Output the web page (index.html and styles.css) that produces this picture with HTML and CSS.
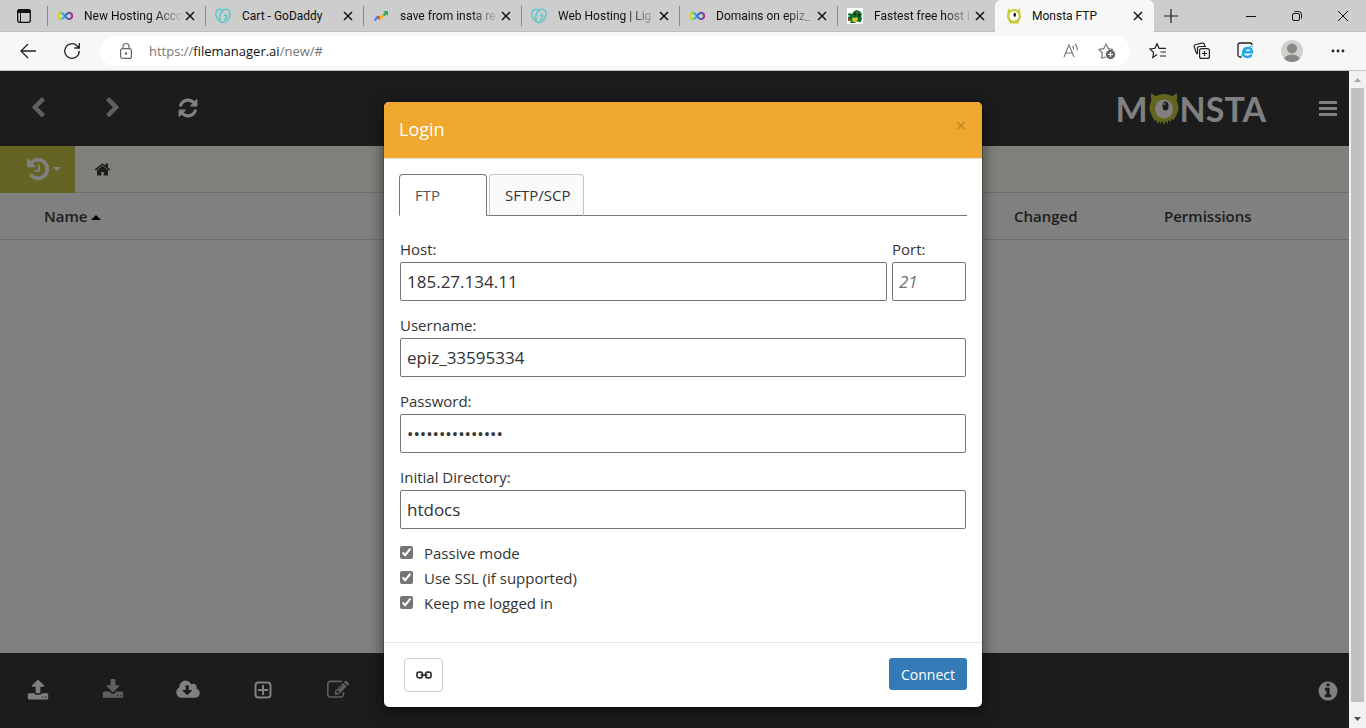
FILE: index.html
```html
<!DOCTYPE html>
<html lang="en">
<head>
<meta charset="utf-8">
<title>Monsta FTP</title>
<link rel="stylesheet" href="styles.css">
</head>
<body>
<svg class="defs" aria-hidden="true">
  <defs>
    <linearGradient id="rainbow" x1="0" x2="1" y1="0" y2="0">
      <stop offset="0" stop-color="#f2d600"/><stop offset=".18" stop-color="#a6cf2c"/><stop offset=".35" stop-color="#1fb0d8"/><stop offset=".6" stop-color="#2d6fc5"/><stop offset="1" stop-color="#a5278f"/>
    </linearGradient>
    <symbol id="infinity" viewBox="0 0 16 16"><path d="M8 8C6.400 6 5.500 4.700 4 4.700a3.200 3.200 0 0 0 0 6.400C5.500 11.100 6.500 10 8 8s2.500-3.300 4-3.300a3.200 3.200 0 0 1 0 6.400C10.500 11.100 9.600 10 8 8z" fill="none" stroke="url(#rainbow)" stroke-width="2"/></symbol>
    <symbol id="godaddy" viewBox="0 0 16 16"><g fill="none" stroke="#5cc5cb" stroke-width="1.500"><path d="M8.700 3.200C6.500.8 3.300.5 1.800 2.600-.2 5.600 1.500 10.500 4.500 13c1.100 1 2.300 1.500 3.500 1.600 1.200-.1 2.400-.6 3.500-1.600 3-2.500 4.700-7.400 2.700-10.400-1.700-2.400-5.400-1.700-7.600 1.200-2.400 3.100-2.700 7-.8 8.900"/><path d="M8.800 7.300h2.700c.1 2.200-.8 3.900-2.500 4.800"/></g></symbol>
    <symbol id="close" viewBox="0 0 10 10"><path d="M1 1l8 8M9 1L1 9" stroke="#111" stroke-width="1.500"/></symbol>
  </defs>
</svg>

<header class="browser">
  <div class="tabstrip">
    <button class="tab-actions" aria-label="Tab actions"><svg width="16" height="16" viewBox="0 0 16 16"><rect x="1.700" y="1.700" width="12.600" height="12.600" rx="2" fill="none" stroke="#111" stroke-width="1.300"/><path d="M1.500 5V3a2 2 0 0 1 2-2h9a2 2 0 0 1 2 2v2z" fill="#111"/><path d="M4.500 5v9" stroke="#111"/></svg></button>
    <div class="tab"><svg class="favicon"><use href="#infinity"/></svg><span class="tab-title fade">New Hosting Acco</span><button aria-label="Close tab"><svg class="x"><use href="#close"/></svg></button></div>
    <div class="tab"><svg class="favicon"><use href="#godaddy"/></svg><span class="tab-title">Cart - GoDaddy</span><button aria-label="Close tab"><svg class="x"><use href="#close"/></svg></button></div>
    <div class="tab"><svg class="favicon" viewBox="0 0 16 16" fill="none" stroke-width="2.400"><path d="M1.500 12.500L5 8.500" stroke="#4285f4"/><path d="M4.600 8.500l3 2.500" stroke="#ea4335"/><path d="M7 11l4-4" stroke="#fbbc04"/><path d="M10.600 7.500L14 4" stroke="#34a853"/><path d="M10 3h5v5z" fill="#34a853"/></svg><span class="tab-title fade">save from insta re</span><button aria-label="Close tab"><svg class="x"><use href="#close"/></svg></button></div>
    <div class="tab"><svg class="favicon"><use href="#godaddy"/></svg><span class="tab-title fade">Web Hosting | Lig</span><button aria-label="Close tab"><svg class="x"><use href="#close"/></svg></button></div>
    <div class="tab"><svg class="favicon"><use href="#infinity"/></svg><span class="tab-title fade">Domains on epiz_</span><button aria-label="Close tab"><svg class="x"><use href="#close"/></svg></button></div>
    <div class="tab"><svg class="favicon" viewBox="0 0 16 16"><path d="M0 0h16v16H0z" fill="#fff"/><path d="M1 6l2-1 1 1 2-1 1-2 3-1 2 1 2 1 1 3-1 1 1 2-1 4h-3l-1-1-2 2H3l1-2-3-1V9l2-1-2-1z" fill="#126b2b"/><path d="M6 9l2 1 2-1 1 2-2 3H6l-1-2z" fill="#d9c51e"/><path d="M1 11h2v2H1zM9 4h2v1H9z" fill="#a64b1b"/><path d="M7 5h2v2H7zM11 6h2v3h-1z" fill="#082c15"/></svg><span class="tab-title fade">Fastest free host i</span><button aria-label="Close tab"><svg class="x"><use href="#close"/></svg></button></div>
    <div class="tab active"><svg class="favicon" viewBox="0 0 16 16"><path d="M2 0l2 2.200a8 8 0 0 1 8 0L14 0l.5 5c1 3 .3 6-1.500 8.200L12 16l-2-1-2 1-2-1-2 1-1-2.800C1.200 11 .5 8 1.500 5z" fill="#c6ca3c"/><circle cx="8" cy="8" r="4.700" fill="#fff"/><ellipse cx="8.700" cy="6.800" rx="1.300" ry="2.100" fill="#111"/></svg><span class="tab-title">Monsta FTP</span><button aria-label="Close tab"><svg class="x"><use href="#close"/></svg></button></div>
    <button class="new-tab" aria-label="New tab"><svg width="16" height="16"><path d="M8 1v14M1 8h14" stroke="#222" stroke-width="1.200"/></svg></button>
    <div class="window-buttons">
      <button aria-label="Minimize"><svg width="12" height="12"><path d="M1 6.500h10" stroke="#111"/></svg></button>
      <button aria-label="Restore"><svg width="12" height="12" fill="none" stroke="#111"><rect x="1.500" y="3.500" width="7" height="7" rx="1.500"/><path d="M3.500 1.500h4a3 3 0 0 1 3 3v4"/></svg></button>
      <button aria-label="Close window"><svg width="12" height="12"><path d="M1 1l10 10M11 1L1 11" stroke="#111"/></svg></button>
    </div>
  </div>
  <div class="toolbar">
    <button aria-label="Back"><svg width="18" height="18" fill="none" stroke="#222" stroke-width="1.300"><path d="M17 9H2M9 2L2 9l7 7"/></svg></button>
    <button aria-label="Refresh"><svg width="18" height="18" fill="none" stroke="#222" stroke-width="1.300"><path d="M16.300 9A7.300 7.300 0 1 1 14 3.700L16 6M16.300 1v5h-5"/></svg></button>
    <div class="address">
      <svg width="14" height="18" viewBox="0 0 14 18" fill="none" stroke="#666" stroke-width="1.200"><rect x="1.600" y="6.600" width="10.800" height="9.800" rx="2"/><path d="M4 6.500V4.500a3 3 0 0 1 6 0v2"/><circle cx="7" cy="11.500" r=".6" fill="#666"/></svg>
      <span class="url">https://<b>filemanager.ai</b>/new/#</span>
      <button aria-label="Read aloud"><svg width="16" height="18" fill="none" stroke="#777" stroke-width="1.100"><path d="M1 15L6 3l5 12M3 11h6M9.500 4q1.500 1.500 1 3.500M12 2q3 3 2 6.500"/></svg></button>
      <button aria-label="Add to favorites"><svg width="18" height="18" fill="none" stroke="#777" stroke-width="1.200"><path d="M8 15l-4.300 1 .6-5L1 7.500l4.700-.8L8 2l2.300 4.700 4.700.8"/><circle cx="12.500" cy="12.500" r="4.700" fill="#666" stroke="none"/><path d="M12.500 10v5M10 12.500h5" stroke="#fff"/></svg></button>
    </div>
    <button aria-label="Favorites"><svg width="18" height="18" fill="none" stroke="#222" stroke-width="1.200"><path d="M8 12.500L3.800 15.500l.8-5L1 6.900l5-.6L8 1.700l2 4.600h7M11.500 10H17M11 14h6"/></svg></button>
    <button aria-label="Collections"><svg width="18" height="18" fill="none" stroke="#222" stroke-width="1.200"><rect x="6.600" y="6.600" width="9.800" height="9.800" rx="2"/><path d="M11.500 9v5M9 11.500h5M4.500 12.200L3.300 11 1.300 5q-.5-2 1.500-2.500L9 1.200q2-.3 2.500 1.500l.3 1.300M4.500 12V6.500q0-2 2-2H13"/></svg></button>
    <button aria-label="Internet Explorer mode"><svg width="18" height="18" fill="none"><path d="M5 15H3a2 2 0 0 1-2-2V3q0-2 2-2h10q2 0 2 2" stroke="#222" stroke-width="1.300"/><path d="M6 10.300h9q0-4.300-4.300-4.300t-4.600 4.500 4.400 4.500q3 0 4-2.500" stroke="#1eabe8" stroke-width="2.400"/><path d="M5 16q-2-1 2-6 6-7 9-5.500" stroke="#1eabe8"/></svg></button>
    <button class="profile" aria-label="Profile"><svg width="22" height="22"><clipPath id="round"><circle cx="11" cy="11" r="11"/></clipPath><g clip-path="url(#round)"><path d="M0 0h22v22H0z" fill="#d2d0ce"/><circle cx="11" cy="8.500" r="5" fill="#8a8784"/><ellipse cx="11" cy="20" rx="8" ry="5.500" fill="#8a8784"/></g></svg></button>
    <button aria-label="Settings"><svg width="16" height="4" fill="#222"><circle cx="3" cy="2" r="1.400"/><circle cx="8" cy="2" r="1.400"/><circle cx="13" cy="2" r="1.400"/></svg></button>
  </div>
</header>

<div class="page">
  <div class="app">
    <nav class="topbar">
      <button class="cell dim" aria-label="Back"><svg width="22" height="22" viewBox="0 0 1792 1792"><path d="M1427 301l-531 531 531 531q19 19 19 45t-19 45l-166 166q-19 19-45 19t-45-19l-742-742q-19-19-19-45t19-45l742-742q19-19 45-19t45 19l166 166q19 19 19 45t-19 45z"/></svg></button>
      <button class="cell dim" aria-label="Forward"><svg width="22" height="22" viewBox="0 0 1792 1792"><path d="M1363 877l-742 742q-19 19-45 19t-45-19l-166-166q-19-19-19-45t19-45l531-531-531-531q-19-19-19-45t19-45l166-166q19-19 45-19t45 19l742 742q19 19 19 45t-19 45z"/></svg></button>
      <button class="cell" aria-label="Refresh"><svg width="22" height="22" viewBox="0 0 1792 1792"><path d="M1639 1056q0 5-1 7-64 268-268 434.500t-478 166.500q-146 0-282.500-55t-243.500-157l-129 129q-19 19-45 19t-45-19-19-45v-448q0-26 19-45t45-19h448q26 0 45 19t19 45-19 45l-137 137q71 66 161 102t187 36q134 0 250-65t186-179q11-17 53-117 8-23 30-23h192q13 0 22.500 9.500t9.500 22.500zm25-800v448q0 26-19 45t-45 19h-448q-26 0-45-19t-19-45 19-45l138-138q-148-137-349-137-134 0-250 65t-186 179q-11 17-53 117-8 23-30 23h-199q-13 0-22.500-9.500t-9.500-22.500v-7q65-268 270-434.500t480-166.500q146 0 284 55.500t245 156.500l130-129q19-19 45-19t45 19 19 45z"/></svg></button>
      <div class="logo"><span>M</span><svg width="30" height="34" viewBox="0 0 30 34"><path d="M3 0q0 3 4 4 8-4 16 0 4-1 4-4 2 4 .5 8 4 8 0 15l-3 5-2-1-1 3-2-2-1 4-1.500-3-2 4-1.500-4-2 3-1-3-2 3-1-4-2 1-3-6q-4-7 0-15Q1 4 3 0z" fill="#63651f"/><ellipse cx="15" cy="17" rx="9" ry="9.500" fill="#808080"/><ellipse cx="16.500" cy="14" rx="3" ry="4.500" fill="#1c1c1c"/><circle cx="15.500" cy="12" r="1" fill="#808080"/></svg><span>NSTA</span></div>
      <button class="menu" aria-label="Menu"><svg width="20" height="16"><path d="M1 0h18v3H1zM1 6h18v3H1zM1 12h18v3H1z"/></svg></button>
    </nav>
    <div class="crumbs">
      <button class="history" aria-label="History"><svg width="26" height="26" viewBox="0 0 1792 1792"><path d="M1664 896q0 156-61 298t-164 245-245 164-298 61q-172 0-327-72.500t-264-204.500q-7-10-6.500-22.500t8.500-20.500l137-138q10-9 25-9 16 2 23 12 73 95 179 147t225 52q104 0 198.500-40.500t163.500-109.500 109.500-163.500 40.500-198.500-40.500-198.500-109.500-163.500-163.500-109.500-198.500-40.500q-98 0-188 35.500t-160 101.500l137 138q31 30 14 69-17 40-59 40h-448q-26 0-45-19t-19-45v-448q0-42 40-59 39-17 69 14l130 129q107-101 244.500-156.500t284.500-55.500q156 0 298 61t245 164 164 245 61 298zm-640-288v448q0 14-9 23t-23 9h-320q-14 0-23-9t-9-23v-64q0-14 9-23t23-9h224v-352q0-14 9-23t23-9h64q14 0 23 9t9 23z"/></svg><svg width="8" height="4"><path d="M0 0h8L4 4z"/></svg></button>
      <a class="home" href="#" aria-label="Home"><svg width="17" height="17" viewBox="0 0 1792 1792"><path d="M1472 992v480q0 26-19 45t-45 19h-384v-384h-256v384h-384q-26 0-45-19t-19-45v-480q0-1 .5-3t.5-3l575-474 575 474q1 2 1 6zm223-69l-62 74q-8 9-21 11h-3q-13 0-21-7l-692-577-692 577q-12 8-24 7-13-2-21-11l-62-74q-8-10-7-23.500t11-21.500l719-599q32-26 76-26t76 26l244 204v-195q0-14 9-23t23-9h192q14 0 23 9t9 23v408l219 182q10 8 11 21.500t-7 23.500z"/></svg></a>
    </div>
    <table class="files">
      <thead><tr><th class="name">Name <svg width="10" height="5"><path d="M0 5h10L5 0z"/></svg></th><th class="changed">Changed</th><th class="permissions">Permissions</th></tr></thead>
    </table>
    <footer class="bottombar">
      <button class="cell" aria-label="Upload"><svg width="22" height="22" viewBox="0 0 1792 1792"><path d="M1344 1472q0-26-19-45t-45-19-45 19-19 45 19 45 45 19 45-19 19-45zm256 0q0-26-19-45t-45-19-45 19-19 45 19 45 45 19 45-19 19-45zm128-224v320q0 40-28 68t-68 28h-1472q-40 0-68-28t-28-68v-320q0-40 28-68t68-28h427q21 56 70.500 92t110.500 36h256q61 0 110.500-36t70.500-92h427q40 0 68 28t28 68zm-325-648q-17 40-59 40h-256v448q0 26-19 45t-45 19h-256q-26 0-45-19t-19-45v-448h-256q-42 0-59-40-17-39 14-69l448-448q18-19 45-19t45 19l448 448q31 30 14 69z"/></svg></button>
      <button class="cell dim" aria-label="Download"><svg width="22" height="22" viewBox="0 0 1792 1792"><path d="M1344 1344q0-26-19-45t-45-19-45 19-19 45 19 45 45 19 45-19 19-45zm256 0q0-26-19-45t-45-19-45 19-19 45 19 45 45 19 45-19 19-45zm128-224v320q0 40-28 68t-68 28h-1472q-40 0-68-28t-28-68v-320q0-40 28-68t68-28h465l135 136q58 56 136 56t136-56l136-136h464q40 0 68 28t28 68zm-325-569q17 41-14 70l-448 448q-18 19-45 19t-45-19l-448-448q-31-29-14-70 17-39 59-39h256v-448q0-26 19-45t45-19h256q26 0 45 19t19 45v448h256q42 0 59 39z"/></svg></button>
      <button class="cell" aria-label="Fetch file"><svg width="24" height="22" viewBox="-64 0 1920 1792"><path d="M1216 928q0-14-9-23t-23-9h-224v-352q0-13-9.500-22.500t-22.500-9.500h-192q-13 0-22.500 9.500t-9.500 22.500v352h-224q-13 0-22.500 9.500t-9.500 22.500q0 14 9 23l352 352q9 9 23 9t23-9l351-351q10-12 10-24zm640 224q0 159-112.500 271.500t-271.500 112.500h-1088q-185 0-316.500-131.500t-131.500-316.500q0-130 70-240t188-165q-2-30-2-43 0-212 150-362t362-150q156 0 285.500 87t188.500 231q71-62 166-62 106 0 181 75t75 181q0 76-41 138 130 31 213.500 135.500t83.500 238.500z"/></svg></button>
      <button class="cell" aria-label="New"><svg class="line" width="18" height="18"><rect x="1.500" y="1.500" width="15" height="15" rx="3"/><path d="M9 4v10M4 9h10"/></svg></button>
      <button class="cell dim" aria-label="Edit"><svg width="22" height="22" viewBox="0 0 1792 1792"><path d="M888 1184l116-116-152-152-116 116v56h96v96h56zm440-720q-16-16-33 1l-350 350q-17 17-1 33t33-1l350-350q17-17 1-33zm80 594v190q0 119-84.500 203.500t-203.500 84.500h-832q-119 0-203.500-84.500t-84.500-203.500v-832q0-119 84.500-203.500t203.500-84.500h832q63 0 117 25 15 7 18 23 3 17-9 29l-49 49q-14 14-32 8-23-6-45-6h-832q-66 0-113 47t-47 113v832q0 66 47 113t113 47h832q66 0 113-47t47-113v-126q0-13 9-22l64-64q15-15 35-7t20 29zm-96-738l288 288-672 672h-288v-288zm444 132l-92 92-288-288 92-92q28-28 68-28t68 28l152 152q28 28 28 68t-28 68z"/></svg></button>
      <button class="info" aria-label="Information"><svg width="22" height="22" viewBox="0 0 1792 1792"><path d="M1152 1376v-160q0-14-9-23t-23-9h-96v-512q0-14-9-23t-23-9h-320q-14 0-23 9t-9 23v160q0 14 9 23t23 9h96v320h-96q-14 0-23 9t-9 23v160q0 14 9 23t23 9h448q14 0 23-9t9-23zm-128-896v-160q0-14-9-23t-23-9h-192q-14 0-23 9t-9 23v160q0 14 9 23t23 9h192q14 0 23-9t9-23zm640 416q0 209-103 385.500t-279.500 279.500-385.500 103-385.500-103-279.500-279.500-103-385.500 103-385.500 279.500-279.500 385.500-103 385.500 103 279.500 279.500 103 385.500z"/></svg></button>
    </footer>
  </div>

  <div class="overlay">
    <form class="modal" role="dialog" aria-labelledby="login-title">
      <div class="modal-header"><h1 id="login-title">Login</h1><button type="button" class="dismiss" aria-label="Close">×</button></div>
      <div class="modal-body">
        <div class="login-tabs" role="tablist">
          <button type="button" role="tab" aria-selected="true" class="login-tab current">FTP</button>
          <button type="button" role="tab" aria-selected="false" class="login-tab">SFTP/SCP</button>
        </div>
        <div class="fields">
          <div class="row">
            <div class="field grow"><label for="host">Host:</label><input id="host" type="text" value="185.27.134.11"></div>
            <div class="field port"><label for="port">Port:</label><input id="port" type="text" placeholder="21"></div>
          </div>
          <div class="field"><label for="user">Username:</label><input id="user" type="text" value="epiz_33595334"></div>
          <div class="field"><label for="pass">Password:</label><input id="pass" type="password" value="aaaaaaaaaaaaaaa"></div>
          <div class="field"><label for="dir">Initial Directory:</label><input id="dir" type="text" value="htdocs"></div>
          <div class="checks">
            <label><input type="checkbox" checked>Passive mode</label>
            <label><input type="checkbox" checked>Use SSL (if supported)</label>
            <label><input type="checkbox" checked>Keep me logged in</label>
          </div>
        </div>
      </div>
      <div class="modal-footer">
        <button type="button" class="link-button" aria-label="Copy link"><svg width="16" height="8" fill="none" stroke="#333" stroke-width="1.700"><rect x="1" y="1.200" width="5.400" height="5.600" rx="1.800"/><rect x="9.600" y="1.200" width="5.400" height="5.600" rx="1.800"/><path d="M4.500 4h7"/></svg></button>
        <button type="button" class="connect">Connect</button>
      </div>
    </form>
  </div>

  <div class="scrollbar" aria-hidden="true">
    <svg width="17" height="17"><path d="M5 11h7L8.500 7z" fill="#a3a3a3"/></svg>
    <div class="thumb"></div>
    <svg class="down" width="17" height="17"><path d="M5 6h7l-3.500 4z" fill="#505050"/></svg>
  </div>
</div>
</body>
</html>
```

FILE: styles.css
```css
* { box-sizing: border-box; }

body {
  margin: 0;
  height: 100vh;
  display: flex;
  flex-direction: column;
  overflow: hidden;
  font-family: "Open Sans", "Noto Sans", sans-serif;
  font-size: 15px;
  color: #333;
}

button {
  margin: 0;
  padding: 0;
  border: 0;
  background: none;
  font: inherit;
  color: inherit;
  display: flex;
  align-items: center;
  justify-content: center;
}

svg { flex: none; }
.defs { position: absolute; width: 0; height: 0; }

/* Browser frame */
.browser { flex: none; background: #f7f7f7; border-bottom: 1px solid #bfc4c0; }

.tabstrip {
  display: flex;
  height: 32px;
  background: #cdcdcd;
  color: #111;
  font-family: Roboto, sans-serif;
  font-size: 12px;
  box-shadow: inset 0 -1px #bebebe;
}
.tab-actions { width: 47px; }
.tab {
  flex: 0 1 158px;
  min-width: 0;
  display: flex;
  align-items: center;
  padding: 0 10px;
  background: linear-gradient(#888, #888) 0 6px / 1px 20px no-repeat;
}
.tab.active {
  flex-basis: 159px;
  background: #f7f7f7;
  border-radius: 6px 6px 0 0;
  padding: 0 11px;
}
.favicon { width: 16px; height: 16px; }
.tab-title {
  flex: 1;
  min-width: 0;
  margin: 0 1px 0 11px;
  overflow: hidden;
  white-space: nowrap;
  line-height: 20px;
}
.active .tab-title { margin-left: 10px; }
.fade { -webkit-mask-image: linear-gradient(90deg, #000 70%, transparent); mask-image: linear-gradient(90deg, #000 70%, transparent); }
.x { width: 10px; height: 10px; }
.new-tab { width: 34px; }
.window-buttons { display: flex; margin-left: auto; }
.window-buttons button { width: 46px; }

.toolbar { display: flex; align-items: center; height: 38px; padding: 0 6px; }
.toolbar > button { width: 44px; height: 30px; }
.toolbar > .profile { width: 48px; }
.address {
  flex: 1;
  display: flex;
  align-items: center;
  height: 30px;
  margin: 0 6px;
  padding: 0 14px 0 19px;
  border-radius: 15px;
  background: #fff;
  font-size: 13px;
}
.url { flex: 1; margin-left: 16px; color: #757575; }
.url b { font-weight: 400; color: #111; }
.address button { margin-left: 19px; }

/* Dimmed application */
.page { position: relative; flex: 1; min-height: 0; display: flex; overflow: hidden; }
.app { flex: 1; display: flex; flex-direction: column; background: #808080; color: #1c1c1c; }
.topbar, .bottombar { display: flex; align-items: center; height: 75px; background: #1c1c1c; fill: #808080; }
.bottombar { margin-top: auto; }
.cell { width: 75px; height: 75px; padding-bottom: 1px; }
.dim { fill: #606060; }
.line { fill: none; stroke: #808080; stroke-width: 2; }
.logo {
  display: flex;
  align-items: center;
  gap: 1px;
  margin-left: auto;
  color: #808080;
  font: 700 34px/40px Lato, sans-serif;
}
.menu { width: 40px; margin: 0 1px 0 42px; }
.info { width: 40px; margin: 0 1px 0 auto; }

.crumbs { display: flex; align-items: center; height: 47px; background: #80817a; border-bottom: 1px solid #6e6e6e; }
.history { width: 75px; height: 47px; padding-left: 10px; gap: 2px; background: #646524; fill: #808080; }
.home { display: flex; margin-left: 19px; fill: #1c1c1c; }

.files { width: 100%; border-collapse: collapse; table-layout: fixed; }
.files th { height: 46px; padding: 0; border-bottom: 1px solid #6e6e6e; text-align: left; line-height: 20px; font-weight: 600; }
.files .name { padding-left: 44px; }
.files svg { vertical-align: middle; }
.changed { width: 150px; }
.permissions { width: 185px; }

/* Login dialog */
.overlay { position: absolute; inset: 0; display: flex; justify-content: center; align-items: flex-start; padding-top: 30px; }
.modal {
  width: 600px;
  background: #fff;
  background-clip: padding-box;
  border: 1px solid rgba(0, 0, 0, .2);
  border-radius: 6px;
  box-shadow: 0 5px 15px rgba(0, 0, 0, .5);
}
.modal-header {
  display: flex;
  justify-content: space-between;
  align-items: flex-start;
  padding: 14px 15px 16px;
  background: #efa72d;
  border-bottom: 1px solid #e5e5e5;
  border-radius: 5px 5px 0 0;
}
.modal-header h1 { margin: 0; color: #fff; font-size: 18px; line-height: 26px; font-weight: 400; }
.dismiss { width: 12px; height: 18px; color: #bd8424; font-size: 18px; line-height: 18px; }
.modal-body { padding: 15px; }

.login-tabs { display: flex; gap: 2px; height: 42px; border-bottom: 1px solid #777; }
.login-tab {
  height: 42px;
  padding: 0 13px 0 15px;
  border: 1px solid #c4c4c4;
  border-bottom-color: #777;
  border-radius: 4px 4px 0 0;
  background: #fafafa;
}
.login-tab.current {
  width: 88px;
  justify-content: flex-start;
  border-color: #777;
  border-bottom-color: #fff;
  background: #fff;
  color: #555;
}

.fields { display: flex; flex-direction: column; gap: 14px; padding: 23px 1px 13px; }
.row { display: flex; gap: 5px; }
.field { display: flex; flex-direction: column; gap: 2px; }
.grow { flex: 1; }
.port { width: 74px; }
.field label { line-height: 21px; }
.field input {
  width: 100%;
  height: 39px;
  padding: 0 6px;
  border: 1px solid #767676;
  border-radius: 2px;
  background: #fff;
  color: #333;
  font: 17px "Open Sans", sans-serif;
}
.field input::placeholder { color: #757575; font-style: italic; }
.checks { display: flex; flex-direction: column; gap: 4px; }
.checks label { display: flex; align-items: flex-start; gap: 11px; line-height: 21px; }
.checks input { width: 13px; height: 13px; margin: 3px 0 0; accent-color: #757575; }

.modal-footer {
  display: flex;
  justify-content: space-between;
  align-items: flex-start;
  padding: 15px 15px 15px 20px;
  border-top: 1px solid #e5e5e5;
}
.link-button { width: 39px; height: 34px; border: 1px solid #ccc; border-radius: 4px; }
.connect { height: 32px; padding: 0 12px; border-radius: 3px; background: #337ab7; color: #fff; font-size: 14px; }

.scrollbar { z-index: 1; width: 17px; display: flex; flex-direction: column; background: #f1f1f1; }
.thumb { flex: 1; margin: 0 2px 9px; background: #c1c1c1; }
```
